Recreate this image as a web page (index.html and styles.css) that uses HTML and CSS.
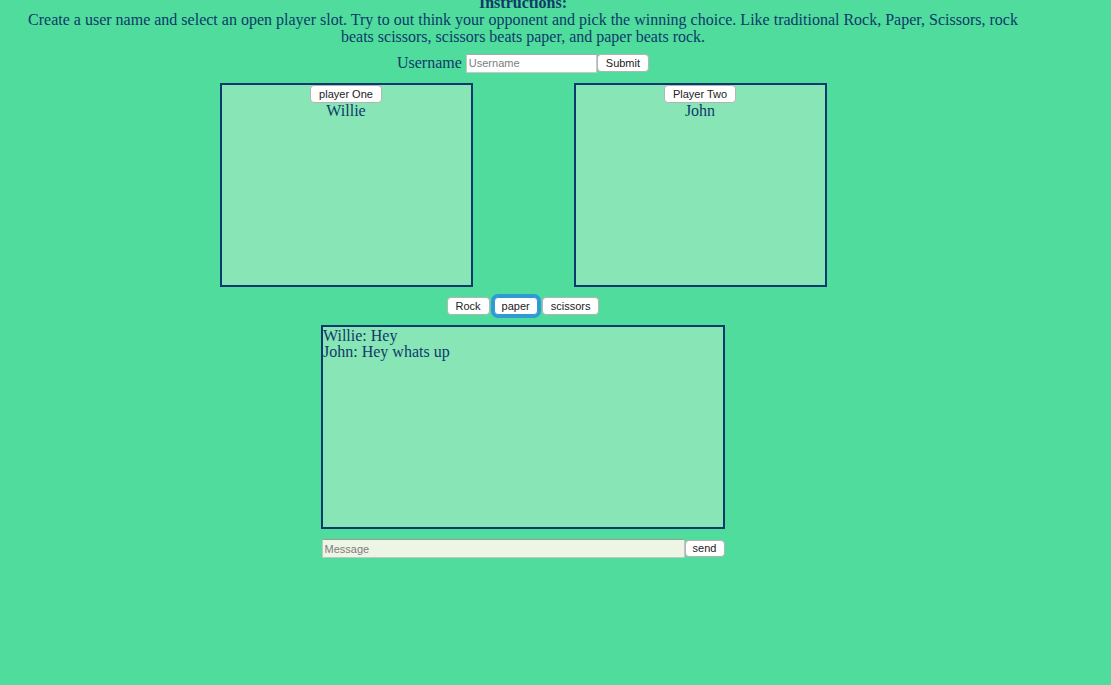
FILE: index.html
```html
<!DOCTYPE html>
<html>
<head>
<meta charset="utf-8">
<link rel="stylesheet" href="styles.css">
</head>
<body>
<div class="page">
  <div class="instructions">
    <div class="title">Instructions:</div>
    <div>Create a user name and select an open player slot. Try to out think your opponent and pick the winning choice. Like traditional Rock, Paper, Scissors, rock beats scissors, scissors beats paper, and paper beats rock.</div>
  </div>
  <div class="user-row">
    <span class="label">Username</span>
    <input class="user-input" type="text" placeholder="Username">
    <button class="btn">Submit</button>
  </div>
  <div class="players">
    <div class="box">
      <button class="btn">player One</button>
      <div class="name">Willie</div>
    </div>
    <div class="box">
      <button class="btn">Player Two</button>
      <div class="name">John</div>
    </div>
  </div>
  <div class="choices">
    <button class="btn">Rock</button>
    <button class="btn focus">paper</button>
    <button class="btn">scissors</button>
  </div>
  <div class="chat">
    <div>Willie: Hey</div>
    <div>John: Hey whats up</div>
  </div>
  <div class="msg-row">
    <input class="msg-input" type="text" placeholder="Message">
    <button class="btn">send</button>
  </div>
</div>
</body>
</html>
```
FILE: styles.css
```css
html, body {
  margin: 0;
  padding: 0;
  background: #4fdc9c;
  overflow: hidden;
}
body {
  font-family: "Liberation Serif", "Times New Roman", serif;
  font-size: 16px;
  color: #0e3a6a;
}
.page {
  width: 1000px;
  margin: 0 0 0 23px;
  display: flex;
  flex-direction: column;
  align-items: center;
  text-align: center;
}
.instructions {
  margin-top: -6px;
  line-height: 17px;
}
.title {
  font-weight: bold;
}
.user-row {
  margin-top: 8px;
  display: flex;
  align-items: center;
  height: 20px;
}
.label {
  margin-right: 4px;
}
.user-input {
  width: 131px;
  height: 19px;
  box-sizing: border-box;
  border: 1px solid #c8c8c8;
  border-top-color: #a9a9a9;
  background: #fff;
  font-family: "Liberation Sans", Arial, sans-serif;
  font-size: 11px;
  padding: 1px 2px;
  margin: 0;
  outline: none;
}
.user-input::placeholder, .msg-input::placeholder {
  color: #7d7d7d;
}
.btn {
  font-family: "Liberation Sans", Arial, sans-serif;
  font-size: 11px;
  color: #222;
  background: #fff;
  border: 1px solid #b4b4b4;
  border-radius: 4px;
  height: 18px;
  padding: 0 8px;
  margin: 0;
  line-height: 16px;
  box-sizing: border-box;
}
.btn.focus {
  box-shadow: 0 0 0 3px #2f9ad6;
  border-color: #2f9ad6;
  padding: 0 7px;
}
.players {
  margin-top: 10px;
  display: flex;
  gap: 101px;
}
.box {
  width: 253px;
  height: 204px;
  box-sizing: border-box;
  border: 2px solid #0d3a6c;
  background: #88e6b6;
  display: flex;
  flex-direction: column;
  align-items: center;
}
.name {
  line-height: 17px;
  margin-top: -1px;
}
.choices {
  margin-top: 10px;
  display: flex;
  gap: 4px;
}
.chat {
  margin-top: 10px;
  width: 404px;
  height: 204px;
  box-sizing: border-box;
  border: 2px solid #0d3a6c;
  background: #88e6b6;
  text-align: left;
  line-height: 16px;
  padding-top: 1px;
}
.msg-row {
  margin-top: 10px;
  display: flex;
  align-items: center;
}
.msg-input {
  width: 363px;
  height: 19px;
  box-sizing: border-box;
  border: 1px solid #c4c4c4;
  border-top-color: #9a9a9a;
  background: #edf5e4;
  font-family: "Liberation Sans", Arial, sans-serif;
  font-size: 11px;
  padding: 1px 2px;
  margin: 0;
  outline: none;
}
.msg-row .btn {
  height: 17px;
  width: 40px;
  padding: 0;
  line-height: 15px;
}
```
